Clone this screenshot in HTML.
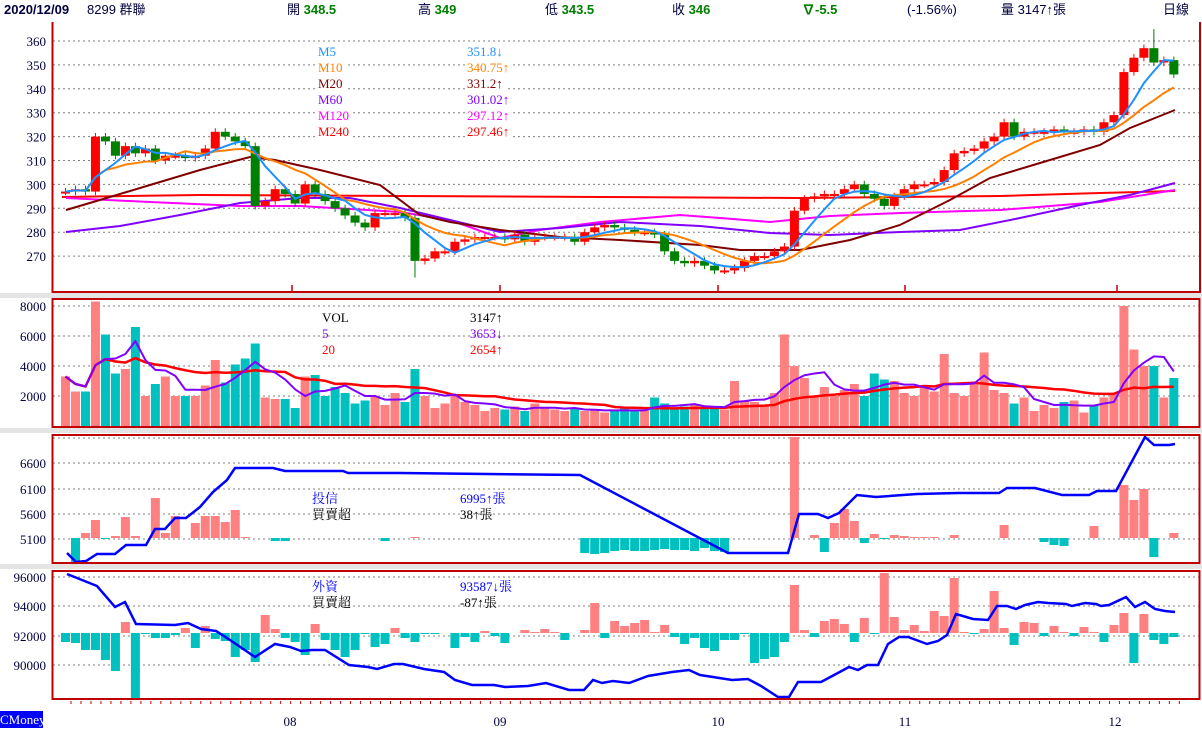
<!DOCTYPE html>
<html><head><meta charset="utf-8">
<style>
html,body{margin:0;padding:0;background:#fff;}
body{width:1202px;height:736px;overflow:hidden;position:relative;font-family:"Liberation Serif","Noto Serif CJK SC",serif;}
svg{position:absolute;left:0;top:0;}
.t{position:absolute;white-space:nowrap;font-size:13px;line-height:14px;}
.l{background:#fff;padding:0 2px;}
.h{font-family:"Liberation Sans","Noto Sans CJK TC",sans-serif;font-size:13px;color:#000040;}
.g{color:#008000;font-weight:bold;}
</style></head><body>
<svg id="s" width="1202" height="736" xmlns="http://www.w3.org/2000/svg"></svg>

<div class="t h" style="left:4px;top:3px;font-weight:bold;">2020/12/09</div>
<div class="t h" style="left:87px;top:3px;">8299 群聯</div>
<div class="t h" style="left:287px;top:3px;">開 <span class="g">348.5</span></div>
<div class="t h" style="left:418px;top:3px;">高 <span class="g">349</span></div>
<div class="t h" style="left:545px;top:3px;">低 <span class="g">343.5</span></div>
<div class="t h" style="left:672px;top:3px;">收 <span class="g">346</span></div>
<div class="t h g" style="left:802px;top:3px;">∇-5.5</div>
<div class="t h" style="left:907px;top:3px;">(-1.56%)</div>
<div class="t h" style="left:1001px;top:3px;">量 3147↑張</div>
<div class="t h" style="left:1163px;top:3px;">日線</div>

<div class="t l" style="left:316px;top:45px;color:#1e90ff">M5</div>
<div class="t l" style="left:316px;top:61px;color:#ff8000">M10</div>
<div class="t l" style="left:316px;top:77px;color:#800000">M20</div>
<div class="t l" style="left:316px;top:93px;color:#8000ff">M60</div>
<div class="t l" style="left:316px;top:109px;color:#ff00ff">M120</div>
<div class="t l" style="left:316px;top:125px;color:#ff0000">M240</div>
<div class="t l" style="left:465px;top:45px;color:#1e90ff">351.8↓</div>
<div class="t l" style="left:465px;top:61px;color:#ff8000">340.75↑</div>
<div class="t l" style="left:465px;top:77px;color:#800000">331.2↑</div>
<div class="t l" style="left:465px;top:93px;color:#8000ff">301.02↑</div>
<div class="t l" style="left:465px;top:109px;color:#ff00ff">297.12↑</div>
<div class="t l" style="left:465px;top:125px;color:#ff0000">297.46↑</div>

<div class="t" style="left:322px;top:311px;color:#000">VOL</div>
<div class="t" style="left:322px;top:327px;color:#8000ff">5</div>
<div class="t" style="left:322px;top:343px;color:#ff0000">20</div>
<div class="t" style="left:470px;top:311px;color:#000">3147↑</div>
<div class="t" style="left:470px;top:327px;color:#8000ff">3653↓</div>
<div class="t" style="left:470px;top:343px;color:#ff0000">2654↑</div>

<div class="t" style="left:312px;top:492px;color:#0000ff">投信</div>
<div class="t" style="left:312px;top:508px;color:#000">買賣超</div>
<div class="t" style="left:460px;top:492px;color:#0000ff">6995↑張</div>
<div class="t" style="left:460px;top:508px;color:#000">38↑張</div>

<div class="t" style="left:312px;top:580px;color:#0000ff">外資</div>
<div class="t" style="left:312px;top:596px;color:#000">買賣超</div>
<div class="t" style="left:460px;top:580px;color:#0000ff">93587↓張</div>
<div class="t" style="left:460px;top:596px;color:#000">-87↑張</div>

<div class="t" style="left:0;top:711px;width:43px;height:17px;background:#0000ff;color:#fff;font-size:13px;line-height:17px;">CMoney</div>

<script>
const S=document.getElementById('s');let h='';
const X=i=>65.5+i*9.985;
const pl=(pts,c,w)=>{h+=`<polyline fill="none" stroke="${c}" stroke-width="${w||2}" points="${pts.map(p=>p.join(',')).join(' ')}"/>`;};
const txt=(x,y,s,a)=>{h+=`<text x="${x}" y="${y}" font-family="Liberation Serif,serif" font-size="13" fill="#000040" text-anchor="${a||'end'}">${s}</text>`;};
const grid=(y)=>{h+=`<line x1="53" x2="1199" y1="${y}" y2="${y}" stroke="#808080" stroke-dasharray="2,3"/>`;};
[[293,5],[428,5],[564,5]].forEach(b=>h+=`<rect x="0" y="${b[0]}" width="1202" height="${b[1]}" fill="#e4e4e4"/>`);
const py=p=>41+(360-p)*2.39;
for(let p=360;p>=270;p-=10){grid(py(p));txt(46,py(p)+5,p);}
[[8000,306],[6000,336],[4000,366],[2000,396]].forEach(a=>{grid(a[1]);txt(46,a[1]+5,a[0]);});
[[6600,463],[6100,489],[5600,514],[5100,539]].forEach(a=>{grid(a[1]);txt(46,a[1]+5,a[0]);});grid(438);
[[96000,577],[94000,606],[92000,636],[90000,665]].forEach(a=>{grid(a[1]);txt(46,a[1]+5,a[0]);});
const C=[297,298,297,320,318,312,316,313,315,310,312,312,311,312,315,322,320,318,316,291,293,298,296,292,300,296,293,290,287,284,282,288,288,288,286,268,269,272,272,276,277,278,278,278,277,279,276,278,278,278,278,276,280,282,283,282,281,280,280,279,272,268,267,268,266,264,264,265,268,270,270,272,274,289,294,295,296,296,298,300,296,294,291,295,298,300,300,301,306,313,314,315,318,320,326,320,322,322,322,323,322,322,323,322,326,329,347,353,357,351,352,346];
const V=[3.3,2.3,2.3,8.3,6.1,3.5,3.8,6.6,2.0,2.8,3.3,2.0,2.0,2.0,2.7,4.4,2.9,4.1,4.5,5.5,1.9,1.8,1.8,1.2,3.3,3.4,2.0,2.6,2.2,1.5,1.7,2.0,1.4,2.2,1.6,3.8,2.0,1.2,1.5,2.0,1.6,1.4,1.0,1.2,1.1,1.3,1.0,1.5,1.2,1.1,1.0,1.2,1.0,1.1,0.9,1.0,1.2,1.0,1.1,1.9,1.5,1.2,1.3,1.4,1.2,1.3,1.1,3.0,1.7,1.6,1.4,2.2,6.1,4.0,3.2,2.0,2.6,2.0,2.4,2.8,2.0,3.5,3.1,3.0,2.2,2.0,2.6,2.3,4.8,2.2,2.0,2.9,4.9,2.4,2.2,1.9,1.0,1.4,1.2,1.6,1.7,0.9,1.4,1.9,2.1,8.0,5.1,4.0,4.0,1.9,3.2];
while(V.length<112)V.splice(95,0,1.5);
const up=C.map((c,i)=>i==0?true:c>=C[i-1]);
V.forEach((v,i)=>{const y=426-v*15;h+=`<rect x="${X(i)-4.5}" y="${y}" width="9" height="${426-y}" fill="${up[i]?'#ff8080':'#00c0c0'}"/>`;});
const ma=(a,n)=>a.map((_,i)=>{let s=0,k=0;for(let j=Math.max(0,i-n+1);j<=i;j++){s+=a[j];k++;}return s/k;});
pl(ma(V,20).map((v,i)=>[X(i),426-v*15]),'#ff0000',2.5);
pl(ma(V,5).map((v,i)=>[X(i),426-v*15]),'#8000ff',2);
pl([[62,197],[200,195],[400,196],[600,197],[800,198],[1000,196],[1100,193],[1175,191]],'#ff0000',2);
pl([[66,198],[150,202],[240,206],[300,206],[400,212],[450,220],[500,238],[540,230],[600,222],[680,215],[720,218],[770,222],[830,216],[900,213],[1000,210],[1100,202],[1175,190]],'#ff00ff',2);
pl([[66,232],[120,226],[180,215],[240,203],[300,198],[350,198],[400,208],[500,232],[560,228],[620,222],[700,226],[770,233],[830,235],[900,232],[960,230],[1020,218],[1080,205],[1130,195],[1175,183]],'#8000ff',2);
pl([[66,210],[100,200],[150,185],[200,170],[250,157],[275,160],[320,170],[380,185],[420,215],[450,222],[500,230],[560,237],[620,240],[700,245],[740,250],[800,250],[850,240],[900,225],[950,200],[990,178],[1050,160],[1100,145],[1130,128],[1175,110]],'#800000',2);
C.forEach((c,i)=>{const o=i==0?c:C[i-1];let hi=Math.max(o,c)+1.5,lo=Math.min(o,c)-1.5;if(i==109)hi=365;if(i==35)lo=261;
 const col=up[i]?'#ff0000':'#008000';const yt=py(Math.max(o,c)),yb=py(Math.min(o,c));
 h+=`<line x1="${X(i)}" x2="${X(i)}" y1="${py(hi)}" y2="${py(lo)}" stroke="${col}" stroke-width="1"/>`;
 h+=`<rect x="${X(i)-4.5}" y="${yt}" width="9" height="${Math.max(2,yb-yt)}" fill="${col}"/>`;});
pl(ma(C,10).map((v,i)=>[X(i),py(v)]),'#ff8000',2);
pl(ma(C,5).map((v,i)=>[X(i),py(v)]),'#1e90ff',2);
const B3={1:-24,2:5,3:18,4:-1,5:2,6:21,7:2,9:40,10:5,11:22,13:15,14:22,15:22,16:16,17:28,18:1,21:-3,22:-3,32:-3,35:1,73:101,75:3,76:-14,77:15,78:29,79:17,80:-5,81:4,82:-1,83:3,84:2,85:1,86:1,87:1,89:3,94:13,98:-4,99:-7,100:-8,103:12,106:53,107:38,108:49,109:-19,111:5};
[-15,-16,-15,-13,-12,-13,-13,-12,-11,-12,-12,-13,-10,-13,-14].forEach((v,k)=>B3[52+k]=v);
for(const k in B3){const v=B3[k];h+=`<rect x="${X(+k)-4.5}" y="${v>0?538-v:538}" width="9" height="${Math.abs(v)}" fill="${v>0?'#ff8080':'#00c0c0'}"/>`;}
pl([[67,553],[76,562],[86,561],[97,554],[115,554],[126,545],[146,545],[155,529],[165,529],[175,518],[186,518],[200,507],[213,492],[227,480],[235,468],[273,468],[285,471],[343,471],[348,473],[400,473],[580,475],[728,553],[788,553],[799,514],[818,514],[828,518],[839,513],[857,495],[876,497],[917,494],[958,493],[999,493],[1007,488],[1035,488],[1062,495],[1089,495],[1097,491],[1116,491],[1145,437],[1154,445],[1169,445],[1175,444]],'#0000ff',2.5);
const B4=[-9,-10,-17,-17,-27,-38,11,-65,-1,-5,-5,-2,5,-15,7,-6,-8,-24,-17,-29,18,4,-5,-9,-22,9,-7,-17,-24,-17,-1,-14,-11,5,-5,-9,-1,-1,0,-15,-4,-9,2,-3,-10,0,3,1,4,1,-7,0,3,30,-5,12,7,10,13,1,8,-4,-11,-5,-15,-18,-7,-7,-1,-30,-26,-24,-9,48,3,-4,12,14,9,-9,15,-1,60,16,3,8,2,22,17,55,1,-1,4,42,5,-12,11,10,-3,7,1,-3,6,1,-9,8,20,-30,19,-7,-11,-4];
B4.forEach((v,i)=>{if(!v)return;h+=`<rect x="${X(i)-4.5}" y="${v>0?633-v:633}" width="9" height="${Math.abs(v)}" fill="${v>0?'#ff8080':'#00c0c0'}"/>`;});
pl([[67,574],[97,586],[115,607],[125,602],[136,624],[175,625],[188,623],[201,629],[216,631],[230,640],[255,657],[275,644],[290,647],[301,651],[312,650],[325,650],[349,665],[368,667],[377,669],[394,664],[403,664],[424,669],[444,672],[455,680],[472,685],[494,685],[505,687],[528,686],[546,683],[569,690],[584,690],[593,680],[602,683],[613,681],[629,683],[648,676],[672,672],[689,670],[700,675],[713,677],[732,680],[748,679],[761,686],[778,697],[789,697],[798,682],[821,682],[836,674],[849,667],[858,670],[867,665],[878,665],[888,644],[899,637],[908,637],[927,644],[938,641],[947,635],[956,614],[973,619],[988,620],[997,606],[1007,606],[1016,609],[1025,605],[1038,602],[1048,603],[1066,604],[1072,606],[1085,603],[1096,604],[1101,606],[1109,605],[1126,597],[1135,607],[1145,602],[1155,609],[1165,611],[1175,612]],'#0000ff',2.5);
const R='#c00000';
h+=`<polyline fill="none" stroke="${R}" stroke-width="2" points="52.5,22 52.5,292 1200,292 1200,22"/>`;
[[299,427],[435,563],[571,699]].forEach(f=>h+=`<rect x="52.5" y="${f[0]}" width="1147" height="${f[1]-f[0]}" fill="none" stroke="${R}" stroke-width="2"/>`);
[292,500,718,905,1117].forEach(x=>h+=`<line x1="${x}" x2="${x}" y1="285" y2="292" stroke="${R}" stroke-width="1.5"/>`);
for(let i=0;i<112;i++)h+=`<rect x="${X(i)+5}" y="701" width="1" height="3" fill="${R}"/>`;
[[290,'08'],[500,'09'],[718,'10'],[905,'11'],[1115,'12']].forEach(a=>txt(a[0],726,a[1],'middle'));
S.innerHTML=h;
</script>
</body></html>
